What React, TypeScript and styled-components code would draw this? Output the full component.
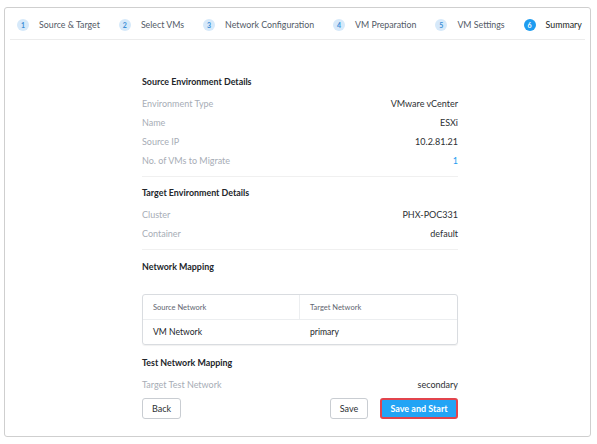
import React from "react";
import styled, { createGlobalStyle } from "styled-components";

const Global = createGlobalStyle`
  html, body { margin: 0; padding: 0; background: #ffffff; }
  body { font-family: Lato, "Open Sans", sans-serif; -webkit-font-smoothing: antialiased; }
`;

const Card = styled.div`
  box-sizing: border-box;
  margin: 7px 0 0 4px;
  width: 587px;
  height: 430px;
  border: 1px solid #cfcfcf;
  border-radius: 3px;
  display: flex;
  flex-direction: column;
`;

const Steps = styled.div`
  margin: 0 5px;
  height: 32px;
  box-sizing: border-box;
  border-bottom: 1px solid #ececec;
  display: flex;
  align-items: center;
  padding: 2px 0 0 7px;
  gap: 19px;
`;

const Step = styled.div`
  display: flex;
  align-items: center;
  gap: 10px;
  white-space: nowrap;
`;

const StepNum = styled.span<{ $active?: boolean }>`
  width: 12px;
  height: 12px;
  border-radius: 50%;
  background: ${(p) => (p.$active ? "#1e9cf0" : "#d6e9fa")};
  color: ${(p) => (p.$active ? "#ffffff" : "#3d8fd6")};
  font-size: 7px;
  font-weight: 700;
  display: flex;
  align-items: center;
  justify-content: center;
`;

const StepLabel = styled.span<{ $active?: boolean }>`
  font-size: 8.8px;
  color: ${(p) => (p.$active ? "#1a1d21" : "#525a66")};
`;

const Body = styled.div`
  width: 316px;
  margin: 0 0 0 137px;
  padding-top: 32px;
  display: flex;
  flex-direction: column;
`;

const Heading = styled.div`
  height: 19px;
  line-height: 19px;
  font-size: 8.9px;
  font-weight: 700;
  color: #22252a;
  margin-bottom: 3px;
`;

const Row = styled.div`
  height: 19px;
  display: flex;
  align-items: center;
  justify-content: space-between;
  font-size: 9px;
`;

const Label = styled.span`
  color: #a7adb6;
`;

const Value = styled.span<{ $link?: boolean }>`
  color: ${(p) => (p.$link ? "#1e9cf0" : "#2c2f33")};
`;

const Divider = styled.div<{ $top: number; $bottom: number }>`
  height: 1px;
  background: #f0f0f0;
  margin: ${(p) => p.$top}px 0 ${(p) => p.$bottom}px;
`;

const Gap = styled.div<{ $h: number }>`
  height: ${(p) => p.$h}px;
`;

const Table = styled.div`
  margin-top: 15px;
  border: 1px solid #d9dce0;
  border-radius: 3px;
  box-shadow: 0 1px 1px rgba(0, 0, 0, 0.06);
`;

const THead = styled.div`
  display: grid;
  grid-template-columns: 157px 1fr;
  height: 24px;
  border-bottom: 1px solid #eceef0;
`;

const TH = styled.div<{ $sep?: boolean }>`
  display: flex;
  align-items: center;
  padding-left: 10px;
  font-size: 7.5px;
  color: #5f6670;
  border-right: ${(p) => (p.$sep ? "1px solid #eceef0" : "none")};
`;

const TBody = styled.div`
  display: grid;
  grid-template-columns: 157px 1fr;
  height: 24px;
`;

const TD = styled.div`
  display: flex;
  align-items: center;
  padding-left: 10px;
  font-size: 8.6px;
  color: #22252a;
`;

const Buttons = styled.div`
  margin-top: 4px;
  display: flex;
  align-items: center;
  gap: 12px;
`;

const Btn = styled.button<{ $w: number; $primary?: boolean }>`
  box-sizing: border-box;
  width: ${(p) => p.$w}px;
  height: 21px;
  padding: 0;
  border-radius: 3px;
  font-family: Lato, "Open Sans", sans-serif;
  font-size: 9px;
  cursor: pointer;
  background: ${(p) => (p.$primary ? "#22a4f5" : "#ffffff")};
  color: ${(p) => (p.$primary ? "#ffffff" : "#2c2f33")};
  border: ${(p) => (p.$primary ? "2px solid #e2444c" : "1px solid #c9cdd2")};
  font-weight: ${(p) => (p.$primary ? 700 : 400)};
`;

const Spacer = styled.div`
  flex: 1;
`;

const steps = [
  "Source & Target",
  "Select VMs",
  "Network Configuration",
  "VM Preparation",
  "VM Settings",
  "Summary",
];

export default function App() {
  return (
    <>
      <Global />
      <Card>
        <Steps>
          {steps.map((s, i) => (
            <Step key={s}>
              <StepNum $active={i === 5}>{i + 1}</StepNum>
              <StepLabel $active={i === 5}>{s}</StepLabel>
            </Step>
          ))}
        </Steps>
        <Body>
          <Heading>Source Environment Details</Heading>
          <Row><Label>Environment Type</Label><Value>VMware vCenter</Value></Row>
          <Row><Label>Name</Label><Value>ESXi</Value></Row>
          <Row><Label>Source IP</Label><Value>10.2.81.21</Value></Row>
          <Row><Label>No. of VMs to Migrate</Label><Value $link>1</Value></Row>
          <Divider $top={6} $bottom={6} />
          <Heading>Target Environment Details</Heading>
          <Row><Label>Cluster</Label><Value>PHX-POC331</Value></Row>
          <Row><Label>Container</Label><Value>default</Value></Row>
          <Divider $top={6} $bottom={7} />
          <Heading>Network Mapping</Heading>
          <Table>
            <THead>
              <TH $sep>Source Network</TH>
              <TH>Target Network</TH>
            </THead>
            <TBody>
              <TD>VM Network</TD>
              <TD>primary</TD>
            </TBody>
          </Table>
          <Gap $h={8} />
          <Heading>Test Network Mapping</Heading>
          <Row><Label>Target Test Network</Label><Value>secondary</Value></Row>
          <Buttons>
            <Btn $w={39}>Back</Btn>
            <Spacer />
            <Btn $w={38}>Save</Btn>
            <Btn $w={78} $primary>Save and Start</Btn>
          </Buttons>
        </Body>
      </Card>
    </>
  );
}
